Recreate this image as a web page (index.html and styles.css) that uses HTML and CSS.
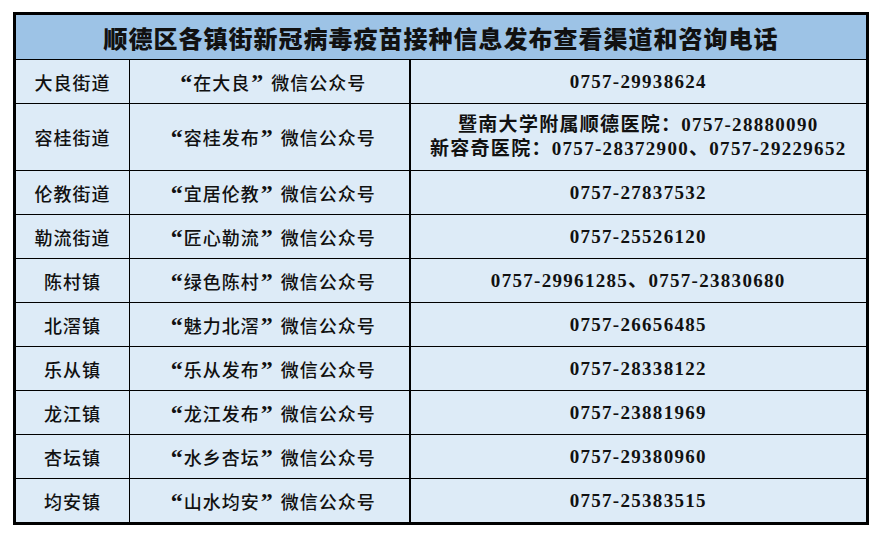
FILE: index.html
```html
<!DOCTYPE html>
<html lang="zh-CN">
<head>
<meta charset="utf-8">
<link rel="stylesheet" href="styles.css">
</head>
<body>
<table class="info">
  <colgroup>
    <col class="c1"><col class="c2"><col class="c3">
  </colgroup>
  <thead>
    <tr class="head"><th colspan="3">顺德区各镇街新冠病毒疫苗接种信息发布查看渠道和咨询电话</th></tr>
  </thead>
  <tbody>
    <tr><td class="town">大良街道</td><td class="wx"><span class="ql">“</span>在大良<span class="qr">”</span>微信公众号</td><td class="tel">0757-29938624</td></tr>
    <tr class="tall"><td class="town">容桂街道</td><td class="wx"><span class="ql">“</span>容桂发布<span class="qr">”</span>微信公众号</td><td class="tel">暨南大学附属顺德医院：0757-28880090<br>新容奇医院：0757-28372900、0757-29229652</td></tr>
    <tr><td class="town">伦教街道</td><td class="wx"><span class="ql">“</span>宜居伦教<span class="qr">”</span>微信公众号</td><td class="tel">0757-27837532</td></tr>
    <tr><td class="town">勒流街道</td><td class="wx"><span class="ql">“</span>匠心勒流<span class="qr">”</span>微信公众号</td><td class="tel">0757-25526120</td></tr>
    <tr><td class="town">陈村镇</td><td class="wx"><span class="ql">“</span>绿色陈村<span class="qr">”</span>微信公众号</td><td class="tel">0757-29961285、0757-23830680</td></tr>
    <tr><td class="town">北滘镇</td><td class="wx"><span class="ql">“</span>魅力北滘<span class="qr">”</span>微信公众号</td><td class="tel">0757-26656485</td></tr>
    <tr><td class="town">乐从镇</td><td class="wx"><span class="ql">“</span>乐从发布<span class="qr">”</span>微信公众号</td><td class="tel">0757-28338122</td></tr>
    <tr><td class="town">龙江镇</td><td class="wx"><span class="ql">“</span>龙江发布<span class="qr">”</span>微信公众号</td><td class="tel">0757-23881969</td></tr>
    <tr><td class="town">杏坛镇</td><td class="wx"><span class="ql">“</span>水乡杏坛<span class="qr">”</span>微信公众号</td><td class="tel">0757-29380960</td></tr>
    <tr><td class="town">均安镇</td><td class="wx"><span class="ql">“</span>山水均安<span class="qr">”</span>微信公众号</td><td class="tel">0757-25383515</td></tr>
  </tbody>
</table>
</body>
</html>
```

FILE: styles.css
```css
html, body {
  margin: 0;
  padding: 0;
  background: #ffffff;
}

body {
  padding: 12px 0 0 13px;
}

.info {
  border-collapse: collapse;
  table-layout: fixed;
  width: 856px;
  border: 3px solid #000;
  color: #111;
  font-family: "Noto Sans CJK SC", "Liberation Serif", serif;
}

.c1 { width: 115px; }
.c2 { width: 280px; }
.c3 { width: auto; }

.head th {
  height: 44px;
  padding: 0;
  background: #9dc3e6;
  font-size: 24px;
  font-weight: 900;
  letter-spacing: 1px;
  border-bottom: 1px solid #000;
  text-align: center;
  vertical-align: middle;
}

td {
  height: 43px;
  padding: 0;
  background: #ddebf7;
  border: 1px solid #000;
  text-align: center;
  vertical-align: middle;
  font-size: 18px;
  font-weight: 500;
  line-height: 24px;
}

.tall td {
  height: 66px;
}

.town {
  letter-spacing: 1px;
}

.wx {
  letter-spacing: 1px;
  border-right: 2px solid #000;
}

.ql,
.qr {
  display: inline-block;
  width: 20px;
  font-family: "Liberation Serif", serif;
  font-size: 24px;
  font-weight: 700;
  line-height: 24px;
  letter-spacing: 0;
  vertical-align: top;
}

.ql {
  text-align: right;
  padding-right: 1px;
}

.qr {
  text-align: left;
  padding-left: 1px;
}

.tel {
  font-family: "Liberation Serif", "Noto Sans CJK SC", serif;
  font-size: 19px;
  font-weight: 600;
  letter-spacing: 1.3px;
}
```
